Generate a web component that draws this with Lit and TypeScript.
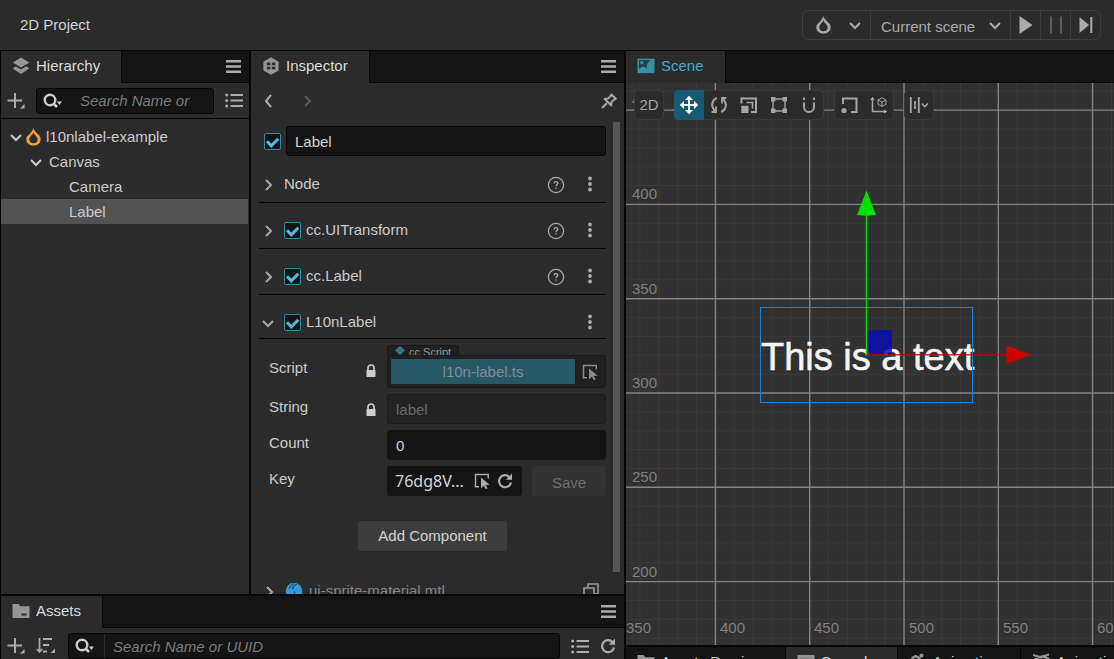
import { LitElement, html, svg, css, nothing, TemplateResult } from "lit";
import { customElement } from "lit/decorators.js";
import { classMap } from "lit/directives/class-map.js";

const chevron = (dir: "down" | "right" | "left") => {
  const d = { down: "M3 6l5 5 5-5", right: "M6 3l5 5-5 5", left: "M10 2L5 8l5 6" }[dir];
  return html`<svg class="icon" width="16" height="16" viewBox="0 0 16 16" aria-hidden="true">
    <path d=${d} fill="none" stroke="currentColor" stroke-width="2" />
  </svg>`;
};

const menuIcon = html`<svg class="icon" width="15" height="13" viewBox="0 0 15 13" aria-hidden="true">
  <path d="M0 0h15v2.500H0zM0 5.200h15v2.500H0zM0 10.500h15V13H0z" fill="currentColor" />
</svg>`;

const plusIcon = html`<svg class="icon" width="18" height="18" viewBox="0 0 18 18" aria-hidden="true">
  <path d="M8 1v15M0.500 8.500h14.500" stroke="currentColor" stroke-width="2" fill="none" />
  <path d="M17.500 12v4.500H13z" fill="currentColor" />
</svg>`;

const sortIcon = html`<svg class="icon" width="20" height="18" viewBox="0 0 20 18" aria-hidden="true">
  <path d="M3.500 1v13M0.800 12l2.700 3 2.700-3" stroke="currentColor" stroke-width="1.700" fill="none" />
  <path d="M7 2h9M7 8h6M7 14.500h4" stroke="currentColor" stroke-width="2" fill="none" />
  <path d="M19 11.500V16h-4.500z" fill="currentColor" />
</svg>`;

const searchIcon = html`<svg class="icon" width="20" height="16" viewBox="0 0 20 16" aria-hidden="true">
  <circle cx="7" cy="7" r="5.300" fill="none" stroke="currentColor" stroke-width="2.400" />
  <path d="M10.500 10.500l3.500 3.500" stroke="currentColor" stroke-width="2.600" />
  <path d="M13.800 8.500H19l-2.600 3.400z" fill="currentColor" />
</svg>`;

const listIcon = html`<svg class="icon" width="18" height="15" viewBox="0 0 18 15" aria-hidden="true">
  <path d="M5.500 2h12.500M5.500 7.500h12.500M5.500 13h12.500" stroke="currentColor" stroke-width="2" />
  <circle cx="1.700" cy="2" r="1.500" fill="currentColor" /><circle cx="1.700" cy="7.500" r="1.500" fill="currentColor" />
  <circle cx="1.700" cy="13" r="1.500" fill="currentColor" />
</svg>`;

const refreshIcon = html`<svg class="icon" width="16" height="16" viewBox="0 0 16 16" aria-hidden="true">
  <path d="M12.600 4.200A6 6 0 1 0 14 9.500" fill="none" stroke="currentColor" stroke-width="2.200" />
  <path d="M15 0.500V6.800H8.800z" fill="currentColor" />
</svg>`;

const flame = (color: string) => html`<svg class="icon" width="15" height="18" viewBox="0 0 15 18" aria-hidden="true">
  <path
    fill=${color}
    fill-rule="evenodd"
    d="M7.200 0C8 2.600 9.700 3.800 11.500 5.800 13.500 7.500 14.700 9 14.700 11.300 14.700 15 11.500 17.700 7.500 17.700S0.300 15 0.300 11.300C0.300 9 1.500 8 3.200 6.500 5 4.500 6.600 2.800 7.200 0zM7.500 4.500C6.500 6.800 3.300 8.700 3.300 11.500c0 2.300 1.800 3.700 4.200 3.700s4.200-1.400 4.200-3.700C11.700 9 8.500 7.300 7.500 4.500z"
  />
</svg>`;

const pinIcon = html`<svg class="icon" width="16" height="16" viewBox="0 0 16 16" aria-hidden="true">
  <path
    d="M10.500 1.500l4.300 4.300-1.600 0.600-2.700 2.700-0.300 3.400-6.600-6.600 3.400-0.300 2.700-2.700zM5.800 10.200L1 15"
    fill="none" stroke="currentColor" stroke-width="2" stroke-linejoin="round"
  />
</svg>`;

const helpIcon = html`<svg class="icon" width="18" height="18" viewBox="0 0 18 18" aria-hidden="true">
  <circle cx="9" cy="9" r="7.600" fill="none" stroke="currentColor" stroke-width="1.300" />
  <path d="M7.200 7.400c0-2.300 3.600-2.200 3.600-0.200 0 1.300-1.800 1.300-1.800 2.800" fill="none" stroke="currentColor" stroke-width="1.300" />
  <circle cx="9" cy="12" r="0.800" fill="currentColor" />
</svg>`;

const kebabIcon = html`<svg class="icon" width="4" height="16" viewBox="0 0 4 16" aria-hidden="true">
  <circle cx="2" cy="2.500" r="1.900" fill="currentColor" /><circle cx="2" cy="8" r="1.900" fill="currentColor" />
  <circle cx="2" cy="13.500" r="1.900" fill="currentColor" />
</svg>`;

const lockIcon = html`<svg class="icon" width="10" height="14" viewBox="0 0 10 14" aria-label="Locked">
  <path d="M2 6V4a3 3 0 0 1 6 0v2" fill="none" stroke="currentColor" stroke-width="1.700" />
  <rect x="0.500" y="6" width="9" height="7" rx="0.500" fill="currentColor" />
</svg>`;

const pickIcon = html`<svg class="icon" width="16" height="16" viewBox="0 0 16 16" aria-hidden="true">
  <path d="M5 13.800H1.500V1.500h12.800v4" fill="none" stroke="currentColor" stroke-width="1.500" />
  <path d="M7 4.500l8.600 7.300-4 0.200 2 3.200-1.800 1-1.900-3.400L7 15.300z" fill="currentColor" />
</svg>`;

const hierarchyIcon = html`<svg class="icon" width="18" height="18" viewBox="0 0 18 18" aria-hidden="true">
  <path d="M9 0.500l8.300 5L9 10.500 0.700 5.500z" fill="currentColor" />
  <path d="M3.500 9.200L9 12.500l5.500-3.300 2.800 2.400L9 17 0.700 11.600z" fill="currentColor" />
</svg>`;

const inspectorIcon = html`<svg class="icon" width="18" height="18" viewBox="0 0 18 18" aria-hidden="true">
  <path d="M9 0.300l7.600 4.400v8.800L9 17.700 1.400 13.500V4.700z" fill="currentColor" />
  <path d="M4.800 5.600h3.500v2.600H4.800zM9.800 5.600h3.500v2.600H9.800zM4.800 9.700h3.500v2.600H4.800zM9.800 9.700h3.500v2.600H9.800z" fill="#2b2b2b" />
</svg>`;

const folderIcon = html`<svg class="icon" width="18" height="18" viewBox="0 0 18 18" aria-hidden="true">
  <path d="M0.500 2h6l1.800 2.200H17.500V16H0.500z" fill="currentColor" />
  <path d="M9.500 11.500h5v2h-5z" fill="#2b2b2b" />
</svg>`;

const sceneIcon = html`<svg class="icon" width="18" height="18" viewBox="0 0 18 18" aria-hidden="true">
  <rect x="0.500" y="1.700" width="17" height="14.500" fill="#3a8fa8" />
  <path d="M2 3h12C10.500 5 9.800 8 10 12 8 8.500 4.500 9.500 2 12z" fill="#24454f" />
  <circle cx="4.800" cy="5.600" r="1.500" fill="#3a8fa8" />
</svg>`;

const consoleIcon = html`<svg class="icon" width="18" height="18" viewBox="0 0 18 18" aria-hidden="true">
  <path d="M0.500 2h17v14h-17z" fill="currentColor" /><path d="M3 5h12" stroke="#777" stroke-width="1" />
</svg>`;

const runnerIcon = html`<svg class="icon" width="18" height="18" viewBox="0 0 18 18" aria-hidden="true">
  <circle cx="12.500" cy="2.400" r="2" fill="currentColor" />
  <path d="M2.500 5.500L6.500 3l4 2-3 5 4 2.500-1 5M7.500 10L5 13.500H1M10 6l2.500 3h3" fill="none" stroke="currentColor" stroke-width="2.200" />
</svg>`;

const graphIcon = html`<svg class="icon" width="18" height="18" viewBox="0 0 18 18" aria-hidden="true">
  <path d="M1 2l7 2 9-2.500M2 7c5-4 10-4 15-1M3 15l6-8 6 8" fill="none" stroke="currentColor" stroke-width="2.200" />
</svg>`;

const playIcon = html`<svg class="icon" width="14" height="18" viewBox="0 0 14 18" aria-hidden="true">
  <path d="M0.500 0l13 9-13 9z" fill="currentColor" />
</svg>`;
const pauseIcon = html`<svg class="icon" width="14" height="18" viewBox="0 0 14 18" aria-hidden="true">
  <path d="M2 0.500v17M12 0.500v17" stroke="currentColor" stroke-width="2" />
</svg>`;
const stepIcon = html`<svg class="icon" width="14" height="16" viewBox="0 0 14 16" aria-hidden="true">
  <path d="M0.500 0l9.500 8-9.500 8z" fill="currentColor" /><path d="M12.300 0v16" stroke="currentColor" stroke-width="2" />
</svg>`;

const materialIcon = html`<svg class="icon" width="18" height="18" viewBox="0 0 18 18" aria-hidden="true">
  <circle cx="9" cy="9" r="8.200" fill="#3498db" />
  <path d="M4 6.500C5 4 6.500 2.500 9 1.500M7.500 7C8 4.500 9.500 3 12 2M9.500 9.500v7" stroke="#1d4e73" stroke-width="1.300" fill="none" />
</svg>`;

const copyIcon = html`<svg class="icon" width="16" height="16" viewBox="0 0 16 16" aria-hidden="true">
  <path d="M1 5h10v10H1zM5 5V1h10v10h-4" fill="none" stroke="currentColor" stroke-width="1.600" />
</svg>`;

const tool = (body: TemplateResult) => html`<svg class="icon" width="20" height="20" viewBox="0 0 20 20" aria-hidden="true">
  <g fill="none" stroke="currentColor" stroke-width="2">${body}</g>
</svg>`;

const moveTool = tool(svg`<path d="M10 3v14M3 10h14" />
  <path d="M10 0.800l4 4.200H6zM10 19.200l4-4.200H6zM0.800 10l4.200-4v8zM19.200 10L15 6v8z" fill="currentColor" stroke="none" />`);
const rotateTool = tool(svg`<path d="M7.800 3C3.800 4.500 0.800 10.500 6 16M12.200 17C16.200 15.500 19.200 9.500 14 4" />
  <path d="M2.500 17H7v-5.500M17.500 3H13v5.500" stroke-width="1.800" />`);
const scaleTool = tool(svg`<path d="M2.500 8.500V3.500H17V17h-5" />
  <path d="M2.300 10.800h7.200V18H2.300z" fill="currentColor" stroke="none" />
  <path d="M7.500 7.500h6v6" stroke-width="1.600" />`);
const rectTool = tool(svg`<path d="M4 4h12v12H4z" stroke-width="1.400" />
  <path d="M2 2h4.400v4.400H2zM13.600 2H18v4.400h-4.400zM2 13.600h4.400V18H2zM13.600 13.600H18V18h-4.400z" fill="currentColor" stroke="none" />`);
const magnetTool = tool(svg`<path d="M5 7.500v4.500a5 5 0 0 0 10 0V7.500M5 2.500V5M15 2.500V5" />`);
const anchorTool = tool(svg`<path d="M4 9V3.500h13.500V17H12" />
  <circle cx="5" cy="15.500" r="2.600" fill="currentColor" stroke="none" />`);
const coordTool = tool(svg`<path d="M3.500 3v13.500H17M2 5l1.500-2L5 5M15 15l2 1.500-2 1.500" stroke-width="1.500" />
  <path d="M13 2.700l4 2.200v4.400l-4 2.200-4-2.200V4.900zM9 4.900l4 2.200 4-2.200M13 7.100v4.400" stroke-width="1" />`);
const alignTool = tool(svg`<path d="M1.800 2v16M6 6v8M9.800 2v16" stroke-width="1.800" /><path d="M12.800 8.500l3 3 3-3" stroke-width="1.600" />`);

const tab = (icon: TemplateResult, name: string, active = true, accent = false) => html`
  <button class=${classMap({ tab: true, active, accent })} role="tab">
    <span class="tab-icon">${icon}</span><span>${name}</span>
  </button>
`;

const tabBase = css`
  * { box-sizing: border-box; }
  button, input, select {
    font: inherit;
    color: inherit;
    background: none;
    border: 0;
    padding: 0;
    margin: 0;
    outline: none;
  }
  button { display: flex; align-items: center; justify-content: center; flex: none; }
  .icon { display: block; flex: none; }
  .tabs {
    display: flex;
    flex: none;
    height: 32px;
    background: #141414;
    border-bottom: 1px solid #050505;
  }
  .tab {
    height: 32px;
    gap: 6px;
    padding: 0 21px 2px 11px;
    border-right: 1px solid #050505;
    color: #ccc;
    white-space: nowrap;
  }
  .tab.active { background: #2b2b2b; color: #dcdcdc; }
  .tab.accent { color: #3fa9d0; }
  .tab-icon { color: #969696; }
  .tabs .menu { margin: 0 6px 0 auto; padding: 0 2px; color: #acacac; }
  .bar { display: flex; align-items: center; color: #acacac; flex: none; }
  .search {
    display: flex;
    align-items: center;
    flex: 1;
    min-width: 0;
    height: 26px;
    background: #141414;
    border: 1px solid #050505;
    border-radius: 3px;
    color: #ccc;
  }
  .search input { flex: 1; min-width: 0; height: 24px; }
  .search input::placeholder { color: #7c7c7c; font-style: italic; opacity: 1; }
`;

@customElement("top-bar")
class TopBar extends LitElement {
  static styles = [
    tabBase,
    css`
      :host { display: flex; align-items: center; justify-content: space-between; height: 50px; padding: 0 13px 0 20px; }
      .title { color: #d4d4d4; }
      .group { display: flex; height: 30px; border: 1px solid #3d3d3d; border-radius: 6px; color: #ababab; }
      .group > * + * { border-left: 1px solid #3d3d3d; }
      .platform { width: 67px; gap: 16px; padding-left: 6px; }
      .scene { display: grid; align-items: center; width: 140px; }
      .scene > * { grid-area: 1 / 1; }
      .scene select { appearance: none; width: 100%; height: 28px; padding: 3px 30px 0 10px; }
      .scene .icon { justify-self: end; margin-right: 7px; pointer-events: none; }
      .play { width: 30px; }
      .off { color: #5c5c5c; }
    `,
  ];
  render() {
    return html`
      <span class="title">2D Project</span>
      <div class="group">
        <button class="platform" aria-label="Preview platform">${flame("#a8a8a8")}${chevron("down")}</button>
        <label class="scene">
          <select aria-label="Scene to play"><option>Current scene</option></select>
          ${chevron("down")}
        </label>
        <button class="play" aria-label="Play">${playIcon}</button>
        <button class="play off" aria-label="Pause">${pauseIcon}</button>
        <button class="play" aria-label="Step">${stepIcon}</button>
      </div>
    `;
  }
}

interface TreeNode { name: string; depth: number; open?: boolean; root?: boolean; selected?: boolean }

const nodes: TreeNode[] = [
  { name: "l10nlabel-example", depth: 0, open: true, root: true },
  { name: "Canvas", depth: 1, open: true },
  { name: "Camera", depth: 2 },
  { name: "Label", depth: 2, selected: true },
];

@customElement("hierarchy-panel")
class HierarchyPanel extends LitElement {
  static styles = [
    tabBase,
    css`
      :host { display: flex; flex-direction: column; background: #2b2b2b; min-width: 0; overflow: hidden; }
      .bar { height: 36px; padding: 0 6px; border-bottom: 1px solid #050505; gap: 11px; }
      .search { padding-left: 6px; }
      .search input { margin: 0 20px 0 17px; }
      .tree { list-style: none; margin: 0; padding: 5px 0; color: #ccc; }
      .node { display: flex; align-items: center; height: 25px; padding-left: 7px; }
      .node.selected { background: #525252; margin-right: 1px; }
      .d1 { padding-left: 27px; }
      .d2 { padding-left: 47px; }
      .twist { width: 16px; margin-right: 2px; }
      .name { padding-left: 3px; }
      .root .name { padding-left: 5px; }
    `,
  ];
  render() {
    return html`
      <div class="tabs">${tab(hierarchyIcon, "Hierarchy")}<button class="menu" aria-label="Menu">${menuIcon}</button></div>
      <div class="bar">
        <button aria-label="Add node">${plusIcon}</button>
        <label class="search">${searchIcon}<input placeholder="Search Name or UUID" aria-label="Search nodes" /></label>
        <button aria-label="List options">${listIcon}</button>
      </div>
      <ul class="tree">
        ${nodes.map(
          (n) => html`<li class=${classMap({ node: true, ["d" + n.depth]: true, root: !!n.root, selected: !!n.selected })}>
            <span class="twist">${n.open ? chevron("down") : nothing}</span>
            ${n.root ? flame("#f0a23a") : nothing}
            <span class="name">${n.name}</span>
          </li>`
        )}
      </ul>
    `;
  }
}

const check = (label: string) => html`<label class="check">
  <input type="checkbox" checked aria-label=${label} />
  <svg width="17" height="17" viewBox="0 0 17 17" aria-hidden="true">
    <path d="M3 8.300l4.300 4.500 7-7" fill="none" stroke="#5cb8d8" stroke-width="3" />
  </svg>
</label>`;

const sections = [
  { name: "Node", check: false },
  { name: "cc.UITransform", check: true },
  { name: "cc.Label", check: true },
];

@customElement("inspector-panel")
class InspectorPanel extends LitElement {
  static styles = [
    tabBase,
    css`
      :host { display: flex; flex-direction: column; background: #2b2b2b; min-width: 0; min-height: 0; overflow: hidden; }
      .nav { height: 35px; padding: 0 7px 0 10px; gap: 22px; }
      .nav .forward { color: #5a5a5a; }
      .nav .pin { margin-left: auto; }
      .body { display: flex; flex: 1; min-height: 0; overflow: hidden; }
      .content { flex: 1; min-width: 0; padding: 8px 0 0 8px; color: #ccc; }
      .thumb { flex: none; width: 7px; height: calc(100% - 26px); margin: 4px 4px 0 7px; background: #555; }
      .check { display: grid; flex: none; }
      .check > * { grid-area: 1 / 1; }
      .check input { appearance: none; width: 17px; height: 17px; background: #141414; border: 1px solid #2f8ca8; border-radius: 2px; }
      .check svg { pointer-events: none; }
      .object { display: flex; align-items: center; gap: 5px; padding-left: 5px; margin-bottom: 1px; }
      .field { flex: 1; min-width: 0; width: 100%; height: 30px; padding: 0 8px; background: #141414; border: 1px solid #050505; border-radius: 3px; color: #d4d4d4; }
      .field.borderless { border-color: #141414; }
      .section { display: flex; align-items: center; height: 46px; padding: 9px 8px 0 1px; border-bottom: 1px solid #050505; }
      .section.open { height: 44px; padding-top: 11px; }
      .twist { width: 16px; margin-right: 8px; color: #aaa; padding-top: 1px; }
      .section .check { margin-right: 5px; }
      .title { flex: 1; font-weight: normal; font-size: 15px; margin: 0; }
      .help { color: #acacac; margin-right: 17px; padding-top: 2px; }
      .kebab { width: 16px; color: #acacac; }
      .props { display: grid; grid-template-columns: minmax(0, 1fr); gap: 6px; padding-top: 6px; }
      .prop { display: grid; grid-template-columns: 128px minmax(0, 1fr); align-items: end; }
      .label { display: flex; align-items: center; justify-content: space-between; height: 30px; padding: 0 11px 4px 10px; }
      .label.tall { height: 36px; }
      .label .icon { margin-top: 5px; }
      .type { display: flex; gap: 4px; width: 72px; height: 10px; overflow: hidden; padding-left: 7px; font-size: 11px; line-height: 12px; color: #9a9a9a; background: #202020; border: 1px solid #181818; border-bottom: 0; border-radius: 3px 3px 0 0; }
      .script { display: flex; height: 33px; padding: 3px 0 3px 3px; background: #202020; border: 1px solid #181818; border-radius: 0 3px 3px 3px; color: #8c8c8c; }
      .asset { flex: 1; min-width: 0; height: 25px; background: #265866; color: #7f8f93; }
      .script .pick { width: 30px; height: 25px; }
      .field:disabled { background: #222; border-color: #1a1a1a; color: #6c6c6c; }
      .pair { display: flex; gap: 10px; }
      .key { display: flex; align-items: center; flex: 1; min-width: 0; height: 30px; padding: 0 9px 0 8px; gap: 7px; background: #141414; border-radius: 3px; color: #acacac; }
      .key input { flex: 1; min-width: 0; color: #d4d4d4; font: 16px "Noto Sans", sans-serif; line-height: 24px; }
      .save { width: 74px; height: 30px; padding-top: 4px; border-radius: 3px; background: #323232; color: #6e6e6e; }
      .add { width: 149px; height: 30px; margin: 25px auto 22px; background: #3d3d3d; border-radius: 3px; color: #d4d4d4; }
      .material { display: flex; align-items: center; height: 36px; padding: 0 7px 0 2px; color: #858585; }
      .material .name { flex: 1; padding-left: 6px; }
      .material .twist { margin-right: 8px; }
      .material .copy { color: #999; }
    `,
  ];
  render() {
    return html`
      <div class="tabs">${tab(inspectorIcon, "Inspector")}<button class="menu" aria-label="Menu">${menuIcon}</button></div>
      <div class="bar nav">
        <button aria-label="Back">${chevron("left")}</button>
        <button class="forward" aria-label="Forward">${chevron("right")}</button>
        <button class="pin" aria-label="Pin">${pinIcon}</button>
      </div>
      <div class="body">
        <div class="content">
          <div class="object">${check("Node enabled")}<input class="field" aria-label="Node name" .value=${"Label"} /></div>
          ${sections.map(
            (s) => html`<div class="section">
              <button class="twist" aria-label="Expand">${chevron("right")}</button>
              ${s.check ? check(s.name) : nothing}
              <h2 class="title">${s.name}</h2>
              <button class="help" aria-label="Help">${helpIcon}</button>
              <button class="kebab" aria-label="More">${kebabIcon}</button>
            </div>`
          )}
          <div class="section open">
            <button class="twist" aria-label="Collapse">${chevron("down")}</button>
            ${check("L10nLabel")}
            <h2 class="title">L10nLabel</h2>
            <button class="kebab" aria-label="More">${kebabIcon}</button>
          </div>
          <div class="props">
            <div class="prop">
              <span class="label tall">Script ${lockIcon}</span>
              <div>
                <div class="type">
                  <svg class="icon" width="10" height="10" viewBox="0 0 10 10" aria-hidden="true"><path d="M5 0l5 4.500L5 9 0 4.500z" fill="#3a7488" /></svg>
                  cc.Script
                </div>
                <div class="script">
                  <button class="asset">l10n-label.ts</button>
                  <button class="pick" aria-label="Pick script">${pickIcon}</button>
                </div>
              </div>
            </div>
            <div class="prop">
              <label class="label" for="string">String ${lockIcon}</label>
              <input id="string" class="field" disabled .value=${"label"} />
            </div>
            <div class="prop">
              <label class="label" for="count">Count</label>
              <input id="count" class="field borderless" .value=${"0"} />
            </div>
            <div class="prop">
              <label class="label" for="key">Key</label>
              <div class="pair">
                <div class="key">
                  <input id="key" .value=${"76dg8V..."} />
                  <button aria-label="Pick key">${pickIcon}</button>
                  <button aria-label="Reset key">${refreshIcon}</button>
                </div>
                <button class="save" disabled>Save</button>
              </div>
            </div>
          </div>
          <button class="add">Add Component</button>
          <div class="material">
            <button class="twist" aria-label="Expand">${chevron("right")}</button>
            ${materialIcon}
            <span class="name">ui-sprite-material.mtl</span>
            <button class="copy" aria-label="Copy">${copyIcon}</button>
          </div>
        </div>
        <div class="thumb"></div>
      </div>
    `;
  }
}

@customElement("assets-panel")
class AssetsPanel extends LitElement {
  static styles = [
    tabBase,
    css`
      :host { display: flex; flex-direction: column; background: #2b2b2b; min-width: 0; overflow: hidden; }
      .bar { height: 31px; padding: 5px 8px 0 6px; gap: 11px; }
      .search { margin: 0 0 0 1px; padding-left: 6px; }
      .search input { margin-left: 9px; padding-left: 8px; border-left: 1px solid #2b2b2b; }
    `,
  ];
  render() {
    return html`
      <div class="tabs">${tab(folderIcon, "Assets")}<button class="menu" aria-label="Menu">${menuIcon}</button></div>
      <div class="bar">
        <button aria-label="Create asset">${plusIcon}</button>
        <button aria-label="Sort">${sortIcon}</button>
        <label class="search">${searchIcon}<input placeholder="Search Name or UUID" aria-label="Search assets" /></label>
        <button aria-label="List options">${listIcon}</button>
        <button aria-label="Refresh">${refreshIcon}</button>
      </div>
    `;
  }
}

const MAJOR = 94.3;
const GRID_X = 89.4;
const GRID_Y = 27.1;
const range = (from: number, to: number) => Array.from({ length: to - from }, (_, i) => from + i);

@customElement("scene-panel")
class ScenePanel extends LitElement {
  static styles = [
    tabBase,
    css`
      :host { display: flex; flex-direction: column; min-width: 0; min-height: 0; overflow: hidden; }
      .view { position: relative; flex: 1; min-height: 0; overflow: hidden; background: #313131; }
      .canvas { display: block; width: 100%; height: 100%; }
      .minor { stroke: #3b3b3b; }
      .major { stroke: #858585; stroke-width: 1.4px; }
      .tick { fill: #808080; font-size: 15px; }
      .text { fill: #f4f4f4; stroke: #f4f4f4; stroke-width: 0.6px; font-size: 38px; }
      .tools { position: absolute; left: 8px; top: 7px; display: flex; gap: 10px; }
      .set { display: flex; height: 30px; background: #2b2b2b; border: 1px solid #3a3a3a; border-radius: 5px; color: #a5a5a5; }
      .set button { width: 30px; height: 30px; margin: -1px 0; }
      .set button:first-child { margin-left: -1px; }
      .set button:last-child { margin-right: -1px; }
      .set .on { background: #165a75; color: #fff; border-radius: 4px 0 0 4px; }
      .dock { display: flex; flex: none; height: 14px; overflow: hidden; background: #141414; border-top: 2px solid #050505; }
    `,
  ];
  render() {
    return html`
      <div class="tabs">${tab(sceneIcon, "Scene", true, true)}</div>
      <div class="view">
        <svg class="canvas" role="img" aria-label="Scene view">
          ${range(-4, 120).map((i) => svg`<line class="minor" x1=${GRID_X + (i * MAJOR) / 5} x2=${GRID_X + (i * MAJOR) / 5} y1="0" y2="100%" />`)}
          ${range(-1, 100).map((i) => svg`<line class="minor" y1=${GRID_Y + (i * MAJOR) / 5} y2=${GRID_Y + (i * MAJOR) / 5} x1="0" x2="100%" />`)}
          ${range(0, 24).map((i) => svg`<line class="major" x1=${GRID_X + i * MAJOR} x2=${GRID_X + i * MAJOR} y1="0" y2="100%" />`)}
          ${range(0, 20).map((i) => svg`<line class="major" y1=${GRID_Y + i * MAJOR} y2=${GRID_Y + i * MAJOR} x1="0" x2="100%" />`)}
          ${range(0, 6).map((i) => svg`<text class="tick" x="6" y=${Math.round(22 + i * MAJOR)}>${450 - i * 50}</text>`)}
          <svg y="100%" overflow="visible">
            ${range(-1, 6).map((i) => svg`<text class="tick" x=${Math.round(94 + i * MAJOR)} y="-12">${400 + i * 50}</text>`)}
          </svg>
          <text class="text" x="135" y="287">This is a text</text>
          <rect x="134.500" y="224.500" width="212" height="95" fill="none" stroke="#0d86dc" />
          <path d="M240.500 248l12-1h13.500v24.500h-25.500z" fill="#0c0cb4" fill-opacity="0.850" />
          <path d="M240.500 271.700h140" stroke="#c40000" stroke-width="1.500" stroke-opacity="0.800" />
          <path d="M380.500 262.500l24.500 9.200-24.500 9.200z" fill="#d00000" />
          <path d="M240.500 271.500V132" stroke="#00dc00" stroke-width="1.500" />
          <path d="M240.500 107.500l9.500 24.500q-9.500 1.500-19 0z" fill="#00e000" />
        </svg>
        <div class="tools">
          <div class="set"><button>2D</button></div>
          <div class="set">
            <button class="on" aria-label="Move">${moveTool}</button>
            <button aria-label="Rotate">${rotateTool}</button>
            <button aria-label="Scale">${scaleTool}</button>
            <button aria-label="Rect">${rectTool}</button>
            <button aria-label="Snap">${magnetTool}</button>
          </div>
          <div class="set">
            <button aria-label="Anchor">${anchorTool}</button>
            <button aria-label="Coordinate">${coordTool}</button>
          </div>
          <div class="set"><button aria-label="Align">${alignTool}</button></div>
        </div>
      </div>
      <div class="dock">
        ${tab(folderIcon, "Assets Preview", false)} ${tab(consoleIcon, "Console")} ${tab(runnerIcon, "Animation", false)}
        ${tab(graphIcon, "Animation Graph", false)}
      </div>
    `;
  }
}

@customElement("app-root")
class AppRoot extends LitElement {
  static styles = css`
    :host {
      display: flex;
      flex-direction: column;
      height: 100vh;
      overflow: hidden;
      background: #2b2b2b;
      color: #ccc;
      font-family: "Liberation Sans", Arial, sans-serif;
      font-size: 15px;
      line-height: 18px;
    }
    top-bar { flex: none; }
    .main {
      flex: 1;
      min-height: 0;
      display: grid;
      grid-template-columns: 248fr 373fr 488fr;
      grid-template-rows: minmax(0, 1fr) auto;
      grid-template-areas: "hierarchy inspector scene" "assets assets scene";
      gap: 2px;
      padding: 1px 0 0 1px;
      background: #050505;
    }
    hierarchy-panel { grid-area: hierarchy; }
    inspector-panel { grid-area: inspector; }
    scene-panel { grid-area: scene; }
    assets-panel { grid-area: assets; }
  `;
  render() {
    return html`
      <top-bar></top-bar>
      <main class="main">
        <hierarchy-panel></hierarchy-panel>
        <inspector-panel></inspector-panel>
        <scene-panel></scene-panel>
        <assets-panel></assets-panel>
      </main>
    `;
  }
}
